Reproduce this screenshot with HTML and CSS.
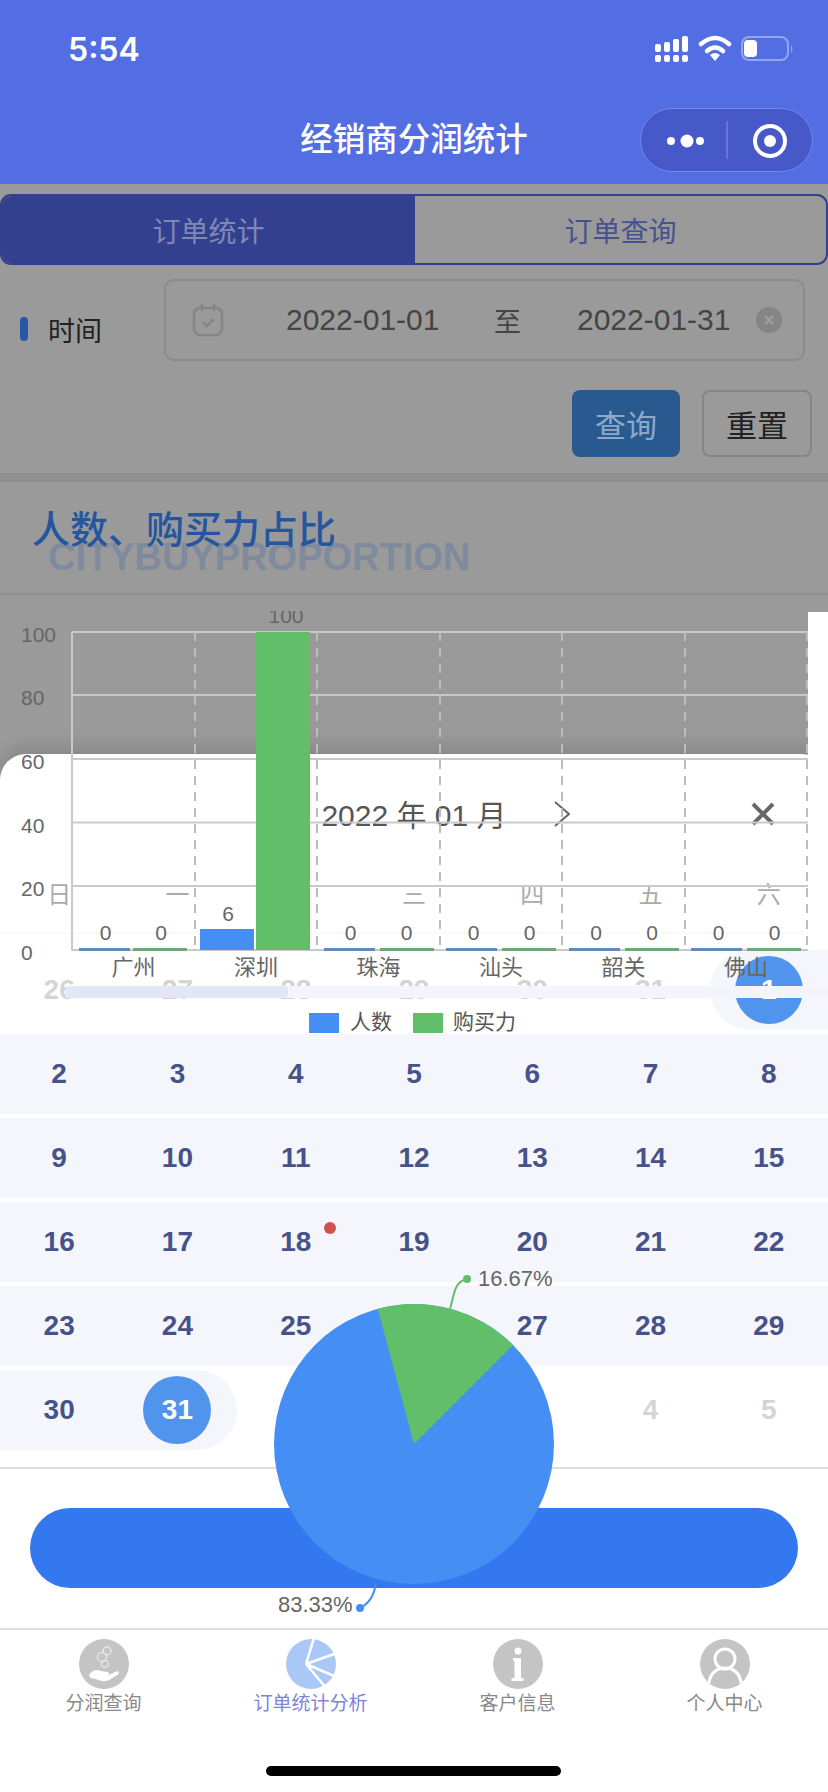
FILE: index.html
```html
<!DOCTYPE html>
<html lang="zh-CN">
<head>
<meta charset="utf-8">
<title>经销商分润统计</title>
<link rel="stylesheet" href="styles.css">
</head>
<body>
<div class="phone">
  <header class="topbar">
    <div class="status">
      <span class="clock">5:54</span>
      <svg class="status-icons" viewBox="655 35 140 30" width="140" height="30">
        <g class="ic-white">
          <rect x="655" y="45" width="6" height="8" rx="2"/><rect x="664" y="43" width="6" height="10" rx="2"/><rect x="673" y="40" width="6" height="13" rx="2"/><rect x="682" y="37" width="6" height="16" rx="2"/>
          <rect x="655" y="56" width="6" height="7" rx="2"/><rect x="664" y="56" width="6" height="7" rx="2"/><rect x="673" y="56" width="6" height="7" rx="2"/><rect x="682" y="56" width="6" height="7" rx="2"/>
          <path d="M715 62l-5-6q5-4 10 0z"/>
          <path d="M707 52q8-7 16 0" class="wifi"/><path d="M701 45q14-12 28 0" class="wifi"/>
          <rect x="744" y="41" width="13" height="17" rx="4"/>
        </g>
        <rect x="742" y="38" width="46" height="23" rx="7" class="batt"/>
        <path d="M791 46q3 3.500 0 8z" class="nub"/>
      </svg>
    </div>
    <div class="nav">
      <span></span>
      <h1 class="nav-title">经销商分润统计</h1>
      <div class="capsule">
        <svg viewBox="0 0 171 62" width="171" height="62">
          <circle cx="30" cy="32" r="4"/><circle cx="46" cy="32" r="6.500"/><circle cx="59" cy="32" r="4"/>
          <path d="M86 12v38" class="cap-div"/>
          <circle cx="129" cy="32" r="15" class="cap-ring"/><circle cx="129" cy="32" r="6"/>
        </svg>
      </div>
    </div>
  </header>

  <main class="content">
    <div class="tabs">
      <div class="tab tab-on">订单统计</div>
      <div class="tab">订单查询</div>
    </div>
    <div class="filter">
      <div class="filter-label"><i class="mark"></i><span>时间</span></div>
      <div class="datebox">
        <svg class="cal-ic" viewBox="0 0 32 34" width="32" height="34"><rect x="2" y="5" width="28" height="27" rx="6"/><path d="M10 1v7M22 1v7M11 19l4 4 7-7"/></svg>
        <span class="date">2022-01-01</span>
        <span class="to">至</span>
        <span class="date">2022-01-31</span>
        <svg class="clear-ic" viewBox="0 0 26 26" width="26" height="26"><circle cx="13" cy="13" r="13"/><path d="M9 9l8 8M17 9l-8 8"/></svg>
      </div>
    </div>
    <div class="actions">
      <div class="btn btn-blue">查询</div>
      <div class="btn btn-line">重置</div>
    </div>
    <div class="sep"></div>
    <section class="head">
      <h2 class="head-cn">人数、购买力占比</h2>
      <div class="head-en">CITYBUYPROPORTION</div>
    </section>

    <div class="sheet">
      <div class="cal-head">
        <svg class="chev" viewBox="0 0 16 30" width="16" height="30"><path d="M15 3L1 15l14 12"/></svg>
        <span class="cal-title">2022 年 01 月</span>
        <svg class="chev" viewBox="0 0 16 30" width="16" height="30"><path d="M1 3l14 12L1 27"/></svg>
        <svg class="close" viewBox="0 0 24 24" width="24" height="24"><path d="M2 2l20 20M22 2L2 22"/></svg>
      </div>
      <div class="weekdays"><span>日</span><span>一</span><span>二</span><span>三</span><span>四</span><span>五</span><span>六</span></div>
      <div class="days">
        <div class="week">
          <div class="day muted">26</div><div class="day muted">27</div><div class="day muted">28</div><div class="day muted">29</div><div class="day muted">30</div><div class="day muted">31</div>
          <div class="day range start"><b class="pick">1</b></div>
        </div>
        <div class="week full">
          <div class="day">2</div><div class="day">3</div><div class="day">4</div><div class="day">5</div><div class="day">6</div><div class="day">7</div><div class="day">8</div>
        </div>
        <div class="week full">
          <div class="day">9</div><div class="day">10</div><div class="day">11</div><div class="day">12</div><div class="day">13</div><div class="day">14</div><div class="day">15</div>
        </div>
        <div class="week full">
          <div class="day">16</div><div class="day">17</div><div class="day">18<i class="dot"></i></div><div class="day">19</div><div class="day">20</div><div class="day">21</div><div class="day">22</div>
        </div>
        <div class="week full">
          <div class="day">23</div><div class="day">24</div><div class="day">25</div><div class="day">26</div><div class="day">27</div><div class="day">28</div><div class="day">29</div>
        </div>
        <div class="week">
          <div class="day range">30</div><div class="day range end"><b class="pick">31</b></div>
          <div class="day muted">1</div><div class="day muted">2</div><div class="day muted">3</div><div class="day muted">4</div><div class="day muted">5</div>
        </div>
      </div>
      <div class="cal-foot"><div class="confirm"></div></div>
    </div>
  </main>

  <nav class="tabbar">
    <div class="tb-item">
      <svg viewBox="0 0 50 50" width="50" height="50">
        <circle cx="25" cy="25" r="25" class="ti-bg"/>
        <circle cx="28" cy="12" r="4" class="ti-coin"/><circle cx="23" cy="18" r="4.500" class="ti-coin"/><circle cx="26" cy="25" r="3.500" class="ti-coin"/>
        <path d="M10 36c3-5 8-6 12-4l6 1c3 0 3 3 0 3.500h-5 6l8-4c3-1 4 1 2 3l-8 5c-3 2-7 2-10 1l-6-2c-2 0-4 0-5-3.500z" class="ti-w"/>
      </svg>
      <span>分润查询</span>
    </div>
    <div class="tb-item tb-on">
      <svg viewBox="0 0 50 50" width="50" height="50">
        <circle cx="25" cy="25" r="25" class="ti-pie"/>
        <path d="M20 25L28 -1M20 25l31-11M20 25l28 12M20 25l21 25" class="ti-cut"/>
      </svg>
      <span>订单统计分析</span>
    </div>
    <div class="tb-item">
      <svg viewBox="0 0 50 50" width="50" height="50">
        <circle cx="25" cy="25" r="25" class="ti-bg"/>
        <circle cx="25" cy="12" r="3.500" class="ti-w"/>
        <path d="M20 19h8v20h2.500v3h-12v-3h3V22H20z" class="ti-w"/>
      </svg>
      <span>客户信息</span>
    </div>
    <div class="tb-item">
      <svg viewBox="0 0 50 50" width="50" height="50">
        <circle cx="25" cy="25" r="25" class="ti-bg"/>
        <circle cx="25" cy="20" r="10" class="ti-line"/>
        <path d="M9 44c1-10 8-15 16-15s15 5 16 15" class="ti-line"/>
      </svg>
      <span>个人中心</span>
    </div>
    <i class="home"></i>
  </nav>

  <svg class="chart" viewBox="0 611 828 429" width="828" height="429">
    <rect x="808" y="612" width="20" height="338" class="strip"/>
    <path d="M0 933H808" class="faint"/>
    <path d="M72 632H808M72 695H808M72 759H808M72 822.500H808M72 886H808" class="grid"/>
    <path d="M72 632V950H808" class="grid"/>
    <path d="M195 632V950M317 632V950M440 632V950M562 632V950M685 632V950M807 632V950" class="dash"/>
    <g class="ylab">
      <text x="21" y="642">100</text><text x="21" y="705">80</text><text x="21" y="769">60</text><text x="21" y="833">40</text><text x="21" y="896">20</text><text x="21" y="960">0</text>
    </g>
    <rect x="79" y="948" width="51" height="3" class="z-blue"/><rect x="133" y="948" width="54" height="3" class="z-green"/>
    <rect x="324" y="948" width="51" height="3" class="z-blue"/><rect x="380" y="948" width="54" height="3" class="z-green"/>
    <rect x="446" y="948" width="51" height="3" class="z-blue"/><rect x="502" y="948" width="54" height="3" class="z-green"/>
    <rect x="569" y="948" width="51" height="3" class="z-blue"/><rect x="625" y="948" width="54" height="3" class="z-green"/>
    <rect x="691" y="948" width="51" height="3" class="z-blue"/><rect x="747" y="948" width="54" height="3" class="z-green"/>
    <rect x="200" y="929" width="54" height="21" class="b-blue"/>
    <rect x="256" y="632" width="54" height="318" class="b-green"/>
    <g class="val">
      <text x="105.500" y="940">0</text><text x="161" y="940">0</text>
      <text x="228" y="921">6</text><text x="286" y="623">100</text>
      <text x="350.500" y="940">0</text><text x="406.500" y="940">0</text>
      <text x="473.500" y="940">0</text><text x="529.500" y="940">0</text>
      <text x="596" y="940">0</text><text x="652" y="940">0</text>
      <text x="718.500" y="940">0</text><text x="774.500" y="940">0</text>
    </g>
    <g class="xlab">
      <text x="133.500" y="975">广州</text><text x="256" y="975">深圳</text><text x="378.500" y="975">珠海</text><text x="501" y="975">汕头</text><text x="623.500" y="975">韶关</text><text x="746" y="975">佛山</text>
    </g>
    <rect x="66" y="986" width="762" height="12" class="zoom-bg"/>
    <rect x="66" y="986" width="222" height="12" rx="4" class="zoom-on"/>
    <rect x="309" y="1013" width="30" height="20" class="b-blue"/>
    <text x="350" y="1029" class="leg">人数</text>
    <rect x="413" y="1013" width="30" height="20" class="b-green"/>
    <text x="453" y="1029" class="leg">购买力</text>
  </svg>

  <svg class="pie" viewBox="260 1260 320 360" width="320" height="360">
    <circle cx="414" cy="1444" r="140" class="b-blue"/>
    <path d="M414 1444L377.800 1308.800A140 140 0 0 1 513 1345Z" class="b-green"/>
    <path d="M450 1309C455 1290 455 1282 467 1279" class="lead-g"/>
    <circle cx="467" cy="1279" r="4" class="b-green"/>
    <text x="478" y="1286" class="pct">16.67%</text>
    <path d="M376 1583C374 1595 370 1603 360 1608" class="lead-b"/>
    <circle cx="360" cy="1608" r="4" class="b-blue"/>
    <text x="278" y="1612" class="pct">83.33%</text>
  </svg>
</div>
</body>
</html>
```

FILE: styles.css
```css
* { box-sizing: border-box; }
html, body { margin: 0; padding: 0; }
body {
  width: 828px;
  height: 1792px;
  overflow: hidden;
  background: #9a9a9a;
  font-family: "Liberation Sans", "Noto Sans CJK SC", sans-serif;
}
.phone {
  position: relative;
  width: 828px;
  height: 1792px;
  display: flex;
  flex-direction: column;
  overflow: hidden;
}

/* top bar */
.topbar { height: 184px; background: #536de3; color: #fff; flex: none; }
.status {
  height: 96px;
  padding: 2px 33px 0 68px;
  display: flex;
  align-items: center;
  justify-content: space-between;
}
.clock { font-family: Inter, "Liberation Sans", sans-serif; font-size: 32px; font-weight: 600; }
.status-icons { display: block; }
.ic-white { fill: #fff; }
.wifi { fill: none; stroke: #fff; stroke-width: 4.500; stroke-linecap: round; }
.batt { fill: none; stroke: #95a5f2; stroke-width: 2; }
.nub { fill: #95a5f2; }
.nav {
  height: 88px;
  display: grid;
  grid-template-columns: 1fr auto 1fr;
  align-items: center;
}
.nav-title { margin: 0; font-size: 32.500px; font-weight: 500; line-height: 44px; white-space: nowrap; }
.capsule {
  justify-self: end;
  margin-right: 15px;
  width: 173px;
  height: 64px;
  border: 1px solid #7585ea;
  border-radius: 32px;
  background: #4759c8;
}
.capsule svg { display: block; fill: #fff; }
.cap-div { stroke: #7080e4; stroke-width: 1.500; fill: none; }
.cap-ring { fill: none; stroke: #fff; stroke-width: 4; }

/* page under the dim layer */
.content { position: relative; flex: 1; min-height: 0; padding-top: 10px; }
.tabs {
  height: 71px;
  display: grid;
  grid-template-columns: 413px 1fr;
  border: 2px solid #33408f;
  border-radius: 11px;
  overflow: hidden;
}
.tab {
  display: flex;
  align-items: center;
  justify-content: center;
  font-size: 28px;
  color: #46528f;
}
.tab-on { background: #33408f; color: #7f89b8; }
.filter {
  margin-top: 14px;
  height: 82px;
  display: grid;
  grid-template-columns: 164px 641px;
  align-items: center;
}
.filter-label {
  display: flex;
  align-items: center;
  gap: 20px;
  padding: 18px 0 0 20px;
  font-size: 27px;
  color: #222;
}
.mark { width: 8px; height: 24px; border-radius: 4px; background: #2855a8; }
.datebox {
  height: 82px;
  padding-left: 26px;
  display: flex;
  align-items: center;
  border: 2px solid #8b8b8b;
  border-radius: 10px;
}
.cal-ic { fill: none; stroke: #858585; stroke-width: 2.500; margin-right: 62px; flex: none; }
.clear-ic { margin-left: 27px; flex: none; }
.clear-ic circle { fill: #858585; }
.clear-ic path { stroke: #9c9c9c; stroke-width: 2.500; }
.date { font-size: 30px; color: #444; width: 152px; white-space: nowrap; }
.to { font-size: 27px; color: #444; margin: 0 56px; }
.actions {
  margin-top: 29px;
  display: flex;
  justify-content: flex-end;
  gap: 22px;
  padding-right: 16px;
}
.btn {
  height: 67px;
  display: flex;
  align-items: center;
  justify-content: center;
  font-size: 31px;
  border-radius: 8px;
}
.btn-blue { width: 108px; background: #28598f; color: #8ea8c8; }
.btn-line { width: 110px; border: 2px solid #858585; color: #222; }
.sep { margin-top: 16px; height: 9px; background: #8f8f8f; }
.head { padding: 24px 0 18px; border-bottom: 2px solid #8f8f8f; height: 113px; }
.head-cn {
  position: relative;
  z-index: 1;
  margin: 0;
  padding-left: 32px;
  font-size: 38px;
  font-weight: 500;
  line-height: 48px;
  color: #2456a0;
  white-space: nowrap;
}
.head-en {
  margin-top: -17px;
  padding-left: 48px;
  font-size: 38px;
  font-weight: 700;
  line-height: 40px;
  color: #7f8b9d;
  white-space: nowrap;
}

/* calendar sheet */
.sheet {
  position: absolute;
  left: 0;
  right: 0;
  top: 570px;
  bottom: 0;
  background: #fff;
  border-radius: 26px 26px 0 0;
  box-shadow: 0 -6px 18px rgba(0, 0, 0, .14);
  padding-top: 30px;
}
.cal-head {
  position: relative;
  height: 60px;
  display: flex;
  align-items: center;
  justify-content: center;
  gap: 47px;
}
.cal-title { font-size: 30px; color: #555; white-space: nowrap; padding-bottom: 3px; }
.chev { fill: none; stroke: #666; stroke-width: 2; }
.close {
  position: absolute;
  right: 53px;
  top: 18px;
  fill: none;
  stroke: #666;
  stroke-width: 4;
}
.weekdays {
  margin-top: 8px;
  height: 80px;
  display: grid;
  grid-template-columns: repeat(7, 1fr);
  align-items: center;
  text-align: center;
  font-size: 24px;
  color: #aaa;
}
.days { margin-top: 18px; display: flex; flex-direction: column; gap: 4px; }
.week { height: 80px; display: grid; grid-template-columns: repeat(7, 1fr); }
.full { background: #f5f6fb; }
.day {
  position: relative;
  display: flex;
  align-items: center;
  justify-content: center;
  font-size: 28px;
  font-weight: 700;
  color: #47528a;
}
.muted { color: #d4d4d6; }
.range { background: #f5f6fb; }
.start { border-radius: 40px 0 0 40px; }
.end { border-radius: 0 40px 40px 0; }
.pick {
  width: 68px;
  height: 68px;
  border-radius: 50%;
  display: flex;
  align-items: center;
  justify-content: center;
  background: #5094ee;
  color: #fff;
}
.dot {
  position: absolute;
  left: 87px;
  top: 20px;
  width: 12px;
  height: 12px;
  border-radius: 50%;
  background: #d0524e;
}
.cal-foot { margin-top: 17px; border-top: 2px solid #ddd; padding: 39px 30px 0; }
.confirm { height: 80px; border-radius: 40px; background: #3478f0; }

/* tab bar */
.tabbar {
  position: relative;
  flex: none;
  height: 164px;
  padding-top: 9px;
  display: grid;
  grid-template-columns: repeat(4, 207px);
  align-content: start;
  background: #fff;
  border-top: 2px solid #ddd;
}
.tb-item {
  display: flex;
  flex-direction: column;
  align-items: center;
  font-size: 19px;
  line-height: 30px;
  color: #888;
}
.tb-item svg { display: block; }
.tb-on { color: #7d84d8; }
.ti-bg { fill: #c4c4c4; }
.ti-w { fill: #fff; }
.ti-coin { fill: none; stroke: #e4e4e4; stroke-width: 1.500; }
.ti-pie { fill: #a9c8f7; }
.ti-cut { fill: none; stroke: #fff; stroke-width: 2.500; }
.ti-line { fill: none; stroke: #fff; stroke-width: 3; }
.home {
  position: absolute;
  left: 266px;
  top: 136px;
  width: 295px;
  height: 10px;
  border-radius: 5px;
  background: #000;
}

/* chart drawn above everything */
.chart { position: absolute; left: 0; top: 611px; }
.pie { position: absolute; left: 260px; top: 1260px; }
.chart text, .pie text { font-family: "Liberation Sans", "Noto Sans CJK SC", sans-serif; }
.strip { fill: #fff; }
.faint { stroke: #f5f5f5; stroke-width: 1; }
.grid { fill: none; stroke: #c9c9c9; stroke-width: 2; }
.dash { stroke: #bcbcbc; stroke-width: 2; stroke-dasharray: 9 7; fill: none; }
.ylab text { font-size: 21px; fill: #666; }
.val text { font-size: 21px; fill: #666; text-anchor: middle; }
.xlab text { font-size: 22px; fill: #666; text-anchor: middle; }
.z-blue { fill: #5f8db5; }
.z-green { fill: #6fa876; }
.b-blue { fill: #458ef4; }
.b-green { fill: #60bf68; }
.zoom-bg { fill: #f3f5fa; }
.zoom-on { fill: #e3e7f5; }
.leg { font-size: 21px; fill: #555; }
.pct { font-size: 22px; fill: #666; }
.lead-g { fill: none; stroke: #60bf68; stroke-width: 2; }
.lead-b { fill: none; stroke: #458ef4; stroke-width: 2; }
```
